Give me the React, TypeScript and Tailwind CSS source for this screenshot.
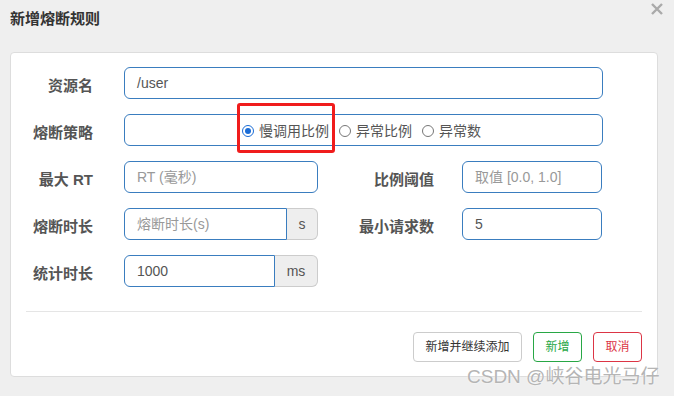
import React from 'react';

const font = "font-['Liberation_Sans','Noto_Sans_CJK_SC',sans-serif]";

const Label: React.FC<{ text: string; className?: string }> = ({ text, className }) => (
  <div className={`pt-[6px] text-right text-[15px] font-bold text-[#555] ${className ?? ''}`}>{text}</div>
);

const Input: React.FC<{ value?: string; placeholder?: string; className?: string; square?: boolean }> = ({
  value,
  placeholder,
  className,
  square,
}) => (
  <div
    className={`h-[32px] flex items-center px-[12px] border border-[#3a7dbf] bg-white text-[14px] ${
      square ? 'rounded-l-[6px]' : 'rounded-[6px]'
    } ${className ?? ''}`}
  >
    {value ? <span className="text-[#555]">{value}</span> : <span className="text-[#999]">{placeholder}</span>}
  </div>
);

const Addon: React.FC<{ text: string; className?: string }> = ({ text, className }) => (
  <div
    className={`h-[32px] flex items-center justify-center bg-[#eee] border border-l-0 border-[#ccc] rounded-r-[6px] text-[14px] text-[#555] ${className ?? ''}`}
  >
    {text}
  </div>
);

const Radio: React.FC<{ label: string; checked?: boolean }> = ({ label, checked }) => (
  <label className="flex items-center">
    {checked ? (
      <span className="w-[12px] h-[12px] rounded-full border-[1.5px] border-[#1a6cd6] flex items-center justify-center">
        <span className="w-[6px] h-[6px] rounded-full bg-[#1a6cd6]" />
      </span>
    ) : (
      <span className="w-[12px] h-[12px] rounded-full border border-[#777] bg-white" />
    )}
    <span className="ml-[5px] text-[14px] text-[#555]">{label}</span>
  </label>
);

export default function App() {
  return (
    <div className={`relative w-[674px] h-[396px] overflow-hidden bg-[#efefef] px-[10px] ${font}`}>
      {/* Header */}
      <div className="h-[38px] flex items-center text-[15px] font-bold text-[#333]">新增熔断规则</div>
      <svg className="absolute top-[3px] left-[651px]" width="12" height="12" viewBox="0 0 12 12">
        <path d="M1 1 L11 11 M11 1 L1 11" stroke="#aaa" strokeWidth="2.4" />
      </svg>

      {/* Panel */}
      <div className="mt-[14px] w-[648px] bg-white border border-[#ddd] rounded-[4px] pt-[14px] pb-[14px]">
        <div className="flex flex-col gap-[15px]">
          <div className="flex items-center">
            <Label text="资源名" className="w-[82px]" />
            <Input value="/user" className="ml-[31px] w-[479px]" />
          </div>

          <div className="flex items-center">
            <Label text="熔断策略" className="w-[82px]" />
            <div className="ml-[31px] w-[479px] h-[32px] border border-[#3a7dbf] rounded-[6px] flex items-center pl-[117px] pt-[2px] gap-[10px]">
              <Radio label="慢调用比例" checked />
              <Radio label="异常比例" />
              <Radio label="异常数" />
            </div>
          </div>

          <div className="flex items-center">
            <Label text="最大 RT" className="w-[82px]" />
            <Input placeholder="RT (毫秒)" className="ml-[31px] w-[194px]" />
            <Label text="比例阈值" className="w-[116px]" />
            <Input placeholder="取值 [0.0, 1.0]" className="ml-[28px] w-[140px]" />
          </div>

          <div className="flex items-center">
            <Label text="熔断时长" className="w-[82px]" />
            <div className="ml-[31px] flex">
              <Input placeholder="熔断时长(s)" className="w-[163px]" square />
              <Addon text="s" className="w-[31px]" />
            </div>
            <Label text="最小请求数" className="w-[116px]" />
            <Input value="5" className="ml-[28px] w-[140px]" />
          </div>

          <div className="flex items-center">
            <Label text="统计时长" className="w-[82px]" />
            <div className="ml-[31px] flex">
              <Input value="1000" className="w-[151px]" square />
              <Addon text="ms" className="w-[43px]" />
            </div>
          </div>
        </div>

        <div className="mx-[15px] mt-[24px] border-t border-[#e5e5e5]" />

        <div className="mt-[20px] flex justify-end gap-[11px] pr-[15px]">
          <button className="h-[30px] w-[109px] border border-[#ccc] rounded-[4px] bg-white text-[12px] text-[#333]">
            新增并继续添加
          </button>
          <button className="h-[30px] w-[49px] border border-[#28a745] rounded-[4px] bg-white text-[12px] text-[#28a745]">
            新增
          </button>
          <button className="h-[30px] w-[49px] border border-[#dc3545] rounded-[4px] bg-white text-[12px] text-[#dc3545]">
            取消
          </button>
        </div>
      </div>

      {/* Highlight box */}
      <div className="absolute left-[237px] top-[103px] w-[98px] h-[50px] border-[3px] border-[#f01c1c] rounded-[3px]" />

      {/* Watermark */}
      <div className="absolute left-[467px] top-[365px] text-[19px] leading-[24px] text-[#b5b5b5] [text-shadow:0_0_2px_#fff]">
        CSDN @峡谷电光马仔
      </div>
    </div>
  );
}
